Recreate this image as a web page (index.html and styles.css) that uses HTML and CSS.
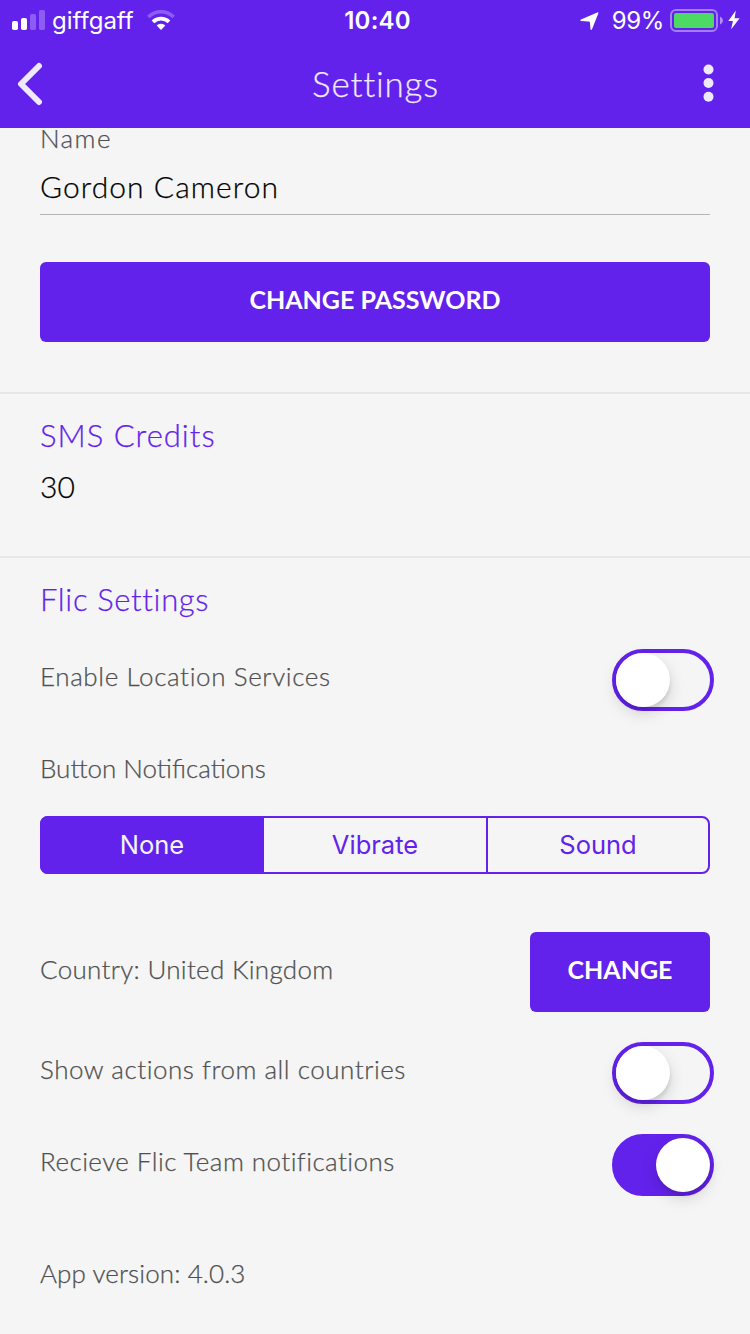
FILE: index.html
```
<!DOCTYPE html>
<html lang="en">
<head>
    <meta charset="UTF-8">
    <meta name="viewport" content="width=device-width, initial-scale=1.0">
    <title>Settings</title>
    <link rel="stylesheet" href="styles.css">
</head>
<body>
    <header class="header">
        <div class="status-bar">
            <div class="status-left">
                <svg class="signal" width="34" height="20" viewBox="0 0 34 20" fill="#fff">
                    <rect x="0" y="11" width="6" height="9" rx="1.8"/>
                    <rect x="9" y="8" width="6" height="12" rx="1.8"/>
                    <rect x="18" y="4" width="6" height="16" rx="1.8" opacity="0.27"/>
                    <rect x="27" y="0" width="6" height="20" rx="1.8" opacity="0.27"/>
                </svg>
                <span class="carrier">giffgaff</span>
                <svg class="wifi" width="28" height="20" viewBox="0 0 28 20" fill="none" stroke="#fff">
                    <path d="M1.3 7 A18 18 0 0 1 26.7 7" stroke-width="3.6" opacity="0.27"/>
                    <path d="M6 11.9 A11.5 11.5 0 0 1 22 11.9" stroke-width="3.8"/>
                    <path d="M14 13.8 C12.3 13.8 10.8 14.5 9.7 15.5 L14 20 L18.3 15.5 C17.2 14.5 15.7 13.8 14 13.8 Z" fill="#fff" stroke="none"/>
                </svg>
            </div>
            <span class="clock">10:40</span>
            <div class="status-right">
                <svg class="location" width="19" height="19" viewBox="0 0 19 19" fill="#fff">
                    <path d="M17.2 0.4 Q18.8 0 18.3 1.6 L12 17.2 Q11.2 18.8 10.5 17.2 L9.9 10.2 Q9.8 9.4 9 9.4 L1.3 9 Q-0.8 8.4 1 7.4 Z"/>
                </svg>
                <span class="percent">99%</span>
                <svg class="battery" width="54" height="24" viewBox="0 0 54 24">
                    <rect x="1" y="1" width="46" height="21" rx="5" fill="none" stroke="#fff" stroke-width="2" opacity="0.42"/>
                    <rect x="4" y="4" width="40" height="15" rx="2" fill="#4cd964"/>
                    <path d="M50 7.5 Q53 9 53 11.5 Q53 14 50 15.5 Z" fill="#fff" opacity="0.5"/>
                </svg>
                <svg class="bolt" width="12" height="20" viewBox="0 0 12 20" fill="#fff">
                    <path d="M7.8 0.5 L0.3 11 H5 L3 19.5 L11.6 8.2 H6.6 Z"/>
                </svg>
            </div>
        </div>
        <div class="nav-bar">
            <svg class="back" width="28" height="44" viewBox="0 0 28 44" fill="none" stroke="#efe9fd" stroke-width="6" stroke-linecap="round" stroke-linejoin="round">
                <path d="M23 4 L5 22 L23 40"/>
            </svg>
            <h1>Settings</h1>
            <svg class="menu" width="12" height="40" viewBox="0 0 12 40" fill="#efe9fd">
                <circle cx="5.5" cy="6.5" r="5"/>
                <circle cx="5.5" cy="20" r="5"/>
                <circle cx="5.5" cy="33.7" r="5"/>
            </svg>
        </div>
    </header>

    <main class="content">
        <section class="section account">
            <div class="label name-label">Name</div>
            <div class="field">Gordon Cameron</div>
            <button class="btn btn-wide">CHANGE PASSWORD</button>
        </section>

        <section class="section credits">
            <h2>SMS Credits</h2>
            <div class="value">30</div>
        </section>

        <section class="section flic">
            <h2 class="flic-title">Flic Settings</h2>
            <div class="row">
                <span class="label location-label">Enable Location Services</span>
                <div class="toggle"><div class="knob"></div></div>
            </div>
            <div class="label notifications-label">Button Notifications</div>
            <div class="segmented">
                <div class="segment active">None</div>
                <div class="segment">Vibrate</div>
                <div class="segment">Sound</div>
            </div>
            <div class="row country-row">
                <span class="label">Country: United Kingdom</span>
                <button class="btn btn-small">CHANGE</button>
            </div>
            <div class="row">
                <span class="label actions-label">Show actions from all countries</span>
                <div class="toggle"><div class="knob"></div></div>
            </div>
            <div class="row">
                <span class="label">Recieve Flic Team notifications</span>
                <div class="toggle on"><div class="knob"></div></div>
            </div>
            <div class="label version">App version: 4.0.3</div>
        </section>
    </main>
</body>
</html>
```
FILE: styles.css
```
* {
    box-sizing: border-box;
}

body {
    margin: 0;
    height: 1334px;
    overflow: hidden;
    background: #f5f5f5;
    font-family: 'Lato', sans-serif;
    font-weight: 300;
    color: #000;
}

svg {
    display: block;
    flex: none;
}

h1, h2 {
    margin: 0;
    font-weight: 300;
}

h1, h2, .label, .field, .value {
    -webkit-text-stroke: 0.25px currentColor;
}

/* header */
.header {
    height: 128px;
    background: #6322ec;
    color: #fff;
}

.status-bar {
    display: grid;
    grid-template-columns: 1fr auto 1fr;
    align-items: center;
    height: 40px;
    padding: 0 10px 0 12px;
    font-family: 'Inter', sans-serif;
    font-size: 24px;
    font-weight: 400;
}

.status-left, .status-right {
    display: flex;
    align-items: center;
}

.status-right {
    justify-content: flex-end;
}

.carrier {
    margin: 1px 13px 0 6px;
}

.clock {
    margin: 1px 0 0 3px;
    font-weight: 600;
    letter-spacing: 0.2px;
}

.location {
    margin-right: 13px;
    margin-top: 2px;
}

.percent {
    margin: 1px 6px 0 0;
    letter-spacing: -0.4px;
}

.battery {
    margin-top: 1px;
    margin-right: 4px;
}

.nav-bar {
    display: flex;
    align-items: center;
    justify-content: space-between;
    height: 86px;
    padding: 0 35px 0 16px;
}

.back {
    margin-top: 2px;
}

h1 {
    margin-left: 4px;
    font-size: 35px;
    line-height: 44px;
    letter-spacing: 0.8px;
    color: #efe9fd;
}

/* content */
.section {
    padding: 21px 40px 50px;
    border-top: 2px solid #e7e7e7;
}

.account {
    padding-top: 0;
    border-top: none;
}

.label {
    font-size: 26px;
    line-height: 36px;
    letter-spacing: 0.45px;
    color: #505050;
}

.name-label {
    line-height: 20px;
    letter-spacing: 1.4px;
}

.location-label {
    letter-spacing: 0.62px;
}

.actions-label {
    letter-spacing: 0.53px;
}

.field {
    margin-top: 18px;
    padding-bottom: 8px;
    border-bottom: 1px solid #b5b5b5;
    font-size: 30px;
    line-height: 40px;
    letter-spacing: 1.08px;
}

h2 {
    font-size: 31px;
    line-height: 40px;
    letter-spacing: 1px;
    color: #6322ec;
}

.flic-title {
    letter-spacing: 0.65px;
}

.value {
    margin-top: 11px;
    font-size: 30px;
    line-height: 40px;
}

.btn {
    display: block;
    height: 80px;
    padding: 0 0 7px;
    border: none;
    border-radius: 6px;
    background: #6322ec;
    color: #fff;
    font-family: inherit;
    font-size: 25px;
    font-weight: 700;
}

.btn-wide {
    width: 100%;
    margin-top: 47px;
}

.btn-small {
    width: 180px;
}

.row {
    display: flex;
    align-items: center;
    justify-content: space-between;
    margin-top: 30px;
}

.row .label {
    margin-bottom: 8px;
}

.notifications-label {
    margin-top: 39px;
    letter-spacing: 0;
}

.toggle {
    display: flex;
    width: 102px;
    height: 62px;
    margin-right: -4px;
    border: 4px solid #6322ec;
    border-radius: 31px;
}

.toggle.on {
    justify-content: flex-end;
    background: #6322ec;
}

.knob {
    width: 54px;
    height: 54px;
    border-radius: 50%;
    background: #fff;
    box-shadow: 0 6px 16px rgba(0, 0, 0, 0.15), 1px 4px 3px rgba(0, 0, 0, 0.07);
}

.segmented {
    display: grid;
    grid-template-columns: repeat(3, 1fr);
    height: 58px;
    margin-top: 30px;
    border: 2px solid #6322ec;
    border-radius: 8px;
}

.segment {
    font-family: 'Inter', sans-serif;
    font-size: 25.5px;
    font-weight: 400;
    line-height: 54px;
    text-align: center;
    color: #6322ec;
}

.segment:last-child {
    border-left: 2px solid #6322ec;
}

.segment.active {
    margin: -2px 0 -2px -2px;
    border-radius: 8px 0 0 8px;
    line-height: 58px;
    background: #6322ec;
    color: #f5f5f5;
}

.country-row {
    margin-top: 58px;
}

.country-row .label {
    margin-bottom: 6px;
    letter-spacing: 0.3px;
}

.version {
    margin-top: 59px;
    letter-spacing: 0.1px;
}
```
